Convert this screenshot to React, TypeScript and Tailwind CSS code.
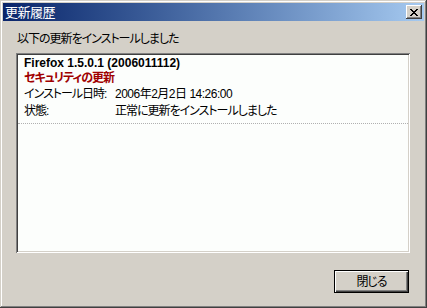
export default function App() {
  const jp = "font-['Liberation_Sans','Noto_Sans_CJK_JP',sans-serif] [font-feature-settings:'palt']";

  return (
    <div
      className={`w-[427px] h-[308px] bg-[#d4d0c8] p-[3px] flex flex-col text-[12px] text-black ${jp} shadow-[inset_-1px_-1px_#404040,inset_1px_1px_#d4d0c8,inset_-2px_-2px_#808080,inset_2px_2px_#ffffff]`}
    >
      {/* title bar */}
      <div className="h-[18px] flex items-center justify-between bg-gradient-to-r from-[#0a246a] to-[#a6caf0]">
        <span className="pl-[2px] text-white text-[13px] leading-none tracking-[-0.5px]">更新履歴</span>
        <button className="w-[16px] h-[14px] mr-[2px] bg-[#d4d0c8] flex items-center justify-center shadow-[inset_-1px_-1px_#404040,inset_1px_1px_#ffffff,inset_-2px_-2px_#808080]">
          <svg width="8" height="7" viewBox="0 0 8 7" shapeRendering="crispEdges">
            <path d="M0 0h2v1h-2zM6 0h2v1h-2zM1 1h2v1h-2zM5 1h2v1h-2zM2 2h4v1h-4zM3 3h2v1h-2zM2 4h4v1h-4zM1 5h2v1h-2zM5 5h2v1h-2zM0 6h2v1h-2zM6 6h2v1h-2z" fill="#000" />
          </svg>
        </button>
      </div>

      <div className="flex flex-col px-[13px] flex-1">
        <div className="pl-[1px] mt-[10px] h-[17px] leading-[17px] tracking-[-1px] whitespace-nowrap">以下の更新をインストールしました</div>

        {/* list */}
        <div className="mt-[5px] w-[394px] h-[200px] bg-[#fcfefc] p-[2px] shadow-[inset_1px_1px_#808080,inset_-1px_-1px_#ffffff,inset_2px_2px_#404040,inset_-2px_-2px_#d4d0c8]">
          <div className="pl-[6px] pt-[1px] pb-[3px] border-b border-dotted border-[#b0b0b0] whitespace-nowrap">
            <div className="font-bold leading-[15px]">Firefox 1.5.0.1 (2006011112)</div>
            <div className="font-bold leading-[15px] text-[#a00000] tracking-[-1px]">セキュリティの更新</div>
            <div className="flex leading-[17px]">
              <span className="w-[91px] shrink-0 tracking-[-1px]">インストール日時:</span>
              <span className="tracking-[-0.5px]">2006年2月2日 14:26:00</span>
            </div>
            <div className="flex leading-[17px]">
              <span className="w-[91px] shrink-0 tracking-[-1px]">状態:</span>
              <span className="tracking-[-1px]">正常に更新をインストールしました</span>
            </div>
          </div>
        </div>

        <div className="flex justify-end mt-[17px] pr-[2px]">
          <button className="w-[75px] h-[23px] border border-black bg-[#d4d0c8] flex items-center justify-center shadow-[inset_1px_1px_#ffffff,inset_-1px_-1px_#404040,inset_-2px_-2px_#808080] tracking-[-1px]">
            閉じる
          </button>
        </div>
      </div>
    </div>
  );
}
